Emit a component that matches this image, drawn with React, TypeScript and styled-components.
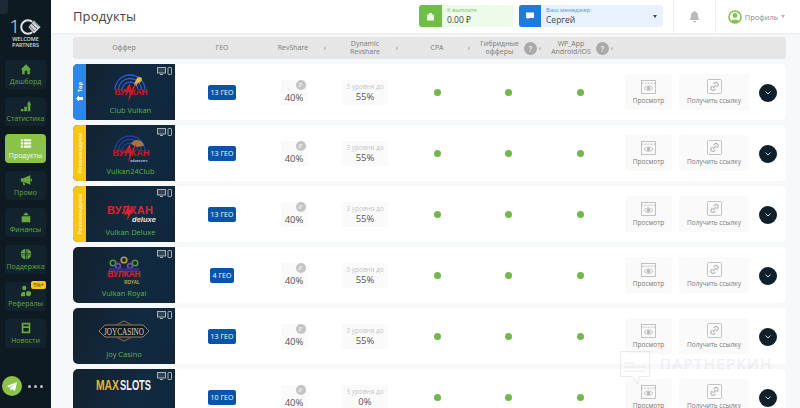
import React from "react";
import styled, { createGlobalStyle } from "styled-components";

const Global = createGlobalStyle`
  html, body { margin: 0; padding: 0; width: 800px; height: 408px; overflow: hidden; background: #f7f8fa; }
  * { box-sizing: border-box; }
  body { font-family: "Open Sans", "Noto Sans", sans-serif; }
`;

const Page = styled.div`display: flex; width: 800px; height: 408px; overflow: hidden; position: relative;`;
const Sidebar = styled.aside`
  width: 51px; flex: none; height: 408px; background: #0e1a22; display: flex; flex-direction: column;
  align-items: center; position: relative; padding-top: 17px;
`;
const TopTab = styled.div`position: absolute; left: 0; top: 0; width: 8px; height: 14px; background: #1b2a33; border-radius: 0 0 3px 0;`;
const Logo = styled.div`display: flex; flex-direction: column; align-items: center; height: 43px; color: #d9dde0; font-size: 5.5px; font-weight: 600; line-height: 6px; text-align: center; letter-spacing: -.1px;`;
const LogoMark = styled.div`display: flex; align-items: center; height: 19px; font-size: 19px; font-weight: 300; line-height: 19px; color: #dfe3e6;`;
const Nav = styled.nav`display: flex; flex-direction: column; gap: 8px; width: 41px;`;
const NavItem = styled.div<{ $active?: boolean }>`
  height: 29px; border-radius: 4px; background: ${p => p.$active ? "#8bc34a" : "#13232d"};
  color: ${p => p.$active ? "#f4faee" : "#66a83e"}; display: flex; flex-direction: column; align-items: center; justify-content: center;
  gap: 3px; font-size: 7px; line-height: 8px; position: relative; white-space: nowrap;
`;
const Badge = styled.span`position: absolute; right: 0; top: -1px; background: #f5c518; color: #4a3b00; font-size: 5.5px; line-height: 8px; padding: 0 2px; border-radius: 2px;`;
const SideFoot = styled.div`position: absolute; left: 2px; top: 376px; display: flex; align-items: center; gap: 6px;`;
const TgCircle = styled.div`width: 20px; height: 20px; border-radius: 50%; background: #8bc34a; display: flex; align-items: center; justify-content: center;`;
const Dots = styled.div`display: flex; gap: 3px;`;
const Dot = styled.i`width: 3px; height: 3px; border-radius: 50%; background: #b9c0c4; display: block;`;

const Main = styled.main`flex: 1; min-width: 0; display: flex; flex-direction: column;`;
const Topbar = styled.header`
  height: 33px; flex: none; background: #fff; box-shadow: 0 1px 2px rgba(0,0,0,.06); display: flex; align-items: center; padding-left: 22px;
`;
const Title = styled.h1`margin: 0 0 1px; font-size: 13px; font-weight: 400; color: #444; width: 346px; letter-spacing: .15px;`;
const InfoBox = styled.div<{ $w: number; $bg: string }>`
  width: ${p => p.$w}px; height: 22px; margin: 0 5px 1px 0; border-radius: 3px; background: ${p => p.$bg}; display: flex; align-items: center; position: relative;
`;
const InfoIcon = styled.div<{ $bg: string; $w: number }>`
  width: ${p => p.$w}px; height: 22px; border-radius: 3px 0 0 3px; background: ${p => p.$bg}; display: flex; align-items: center; justify-content: center; flex: none;
`;
const InfoText = styled.div`padding-left: 5px; display: flex; flex-direction: column; gap: 1px;`;
const InfoLabel = styled.span<{ $c: string }>`font-size: 6px; line-height: 7px; color: ${p => p.$c};`;
const InfoValue = styled.span`font-size: 8.5px; line-height: 10px; color: #444;`;
const Caret = styled.i<{ $c: string; $r: number; $t: number }>`
  position: absolute; right: ${p => p.$r}px; top: ${p => p.$t}px; width: 0; height: 0; border-left: 2.5px solid transparent; border-right: 2.5px solid transparent; border-top: 3px solid ${p => p.$c};
`;
const BarCell = styled.div<{ $w: number; $ml?: number }>`
  width: ${p => p.$w}px; margin-left: ${p => p.$ml ?? 0}px; height: 33px; border-left: 1px solid #eceef0; display: flex; align-items: center; justify-content: center; flex: none; position: relative;
`;
const ProfileText = styled.span`font-size: 7.5px; color: #8a8a8a; margin-left: 3px;`;
const ProfileWrap = styled.div`display: flex; align-items: center; margin-right: 10px;`;

const Content = styled.div`padding: 4px 14px 0 22px; display: flex; flex-direction: column; gap: 5px;`;
const cols = "102px 82px 72px 72px 72px 71px 72px 1fr";
const HeaderRow = styled.div`
  height: 22px; flex: none; background: #e6e6e6; border-radius: 3px; display: grid; grid-template-columns: ${cols}; align-items: center;
  color: #7a7a7a; font-size: 7px; line-height: 8px; text-align: center;
`;
const HCell = styled.div<{ $pl?: number }>`
  display: flex; align-items: center; justify-content: center; padding-left: ${p => p.$pl ?? 0}px; position: relative; height: 22px;
`;
const HDot = styled.i`position: absolute; right: 3px; top: 10px; width: 2px; height: 3px; background: #bdbdbd; border-radius: 1px; display: block;`;
const Help = styled.span`
  width: 13px; height: 13px; border-radius: 50%; background: #a8a8a8; color: #e6e6e6; font-size: 8px; font-weight: 700; line-height: 13px; margin-left: 5px; flex: none;
`;

const Row = styled.div`
  height: 56px; flex: none; background: #fff; border-radius: 5px; display: grid; grid-template-columns: ${cols}; align-items: center;
`;
const Offer = styled.div`height: 56px; display: flex; border-radius: 5px 0 0 5px; overflow: hidden; position: relative;
  background: linear-gradient(115deg, #13212d 0%, #112a40 60%, #10263a 100%);`;
const Tag = styled.div<{ $bg: string }>`
  width: 13px; flex: none; background: ${p => p.$bg}; display: flex; flex-direction: column; align-items: center; justify-content: center; gap: 2px;
`;
const TagText = styled.span<{ $c: string }>`writing-mode: vertical-rl; transform: rotate(180deg); font-size: 5.6px; font-weight: 700; white-space: nowrap; color: ${p => p.$c};`;
const OfferBody = styled.div`flex: 1; display: flex; flex-direction: column; align-items: center; position: relative; padding-top: 6px;`;
const LogoBox = styled.div`height: 34px; display: flex; align-items: center; justify-content: center;`;
const OfferName = styled.div`font-size: 7.5px; line-height: 10px; color: #5fb24a; margin-top: 1px;`;
const Devices = styled.div`position: absolute; right: 3px; top: 3px; display: flex;`;

const GeoCell = styled.div`display: flex; justify-content: center; padding-left: 12px;`;
const Geo = styled.div`
  background: #0b53a8; color: #fff; font-size: 7px; font-weight: 500; height: 15px; line-height: 15px; padding: 0 3px; border-radius: 2px; min-width: 24px; text-align: center;
`;
const Center = styled.div`display: flex; justify-content: center;`;
const RevBox = styled.div`
  width: 27px; height: 25px; background: #fafafa; border-radius: 2px; display: flex; flex-direction: column; align-items: center; position: relative; padding-top: 12px; margin-left: 2px;
`;
const Rub = styled.span`
  position: absolute; top: 0; right: 2px; width: 10px; height: 10px; border-radius: 50%; background: #c4c4c4; color: #f4f4f4; font-size: 6px; line-height: 10px; text-align: center;
`;
const Pct = styled.span`font-size: 9.5px; line-height: 12px; color: #555;`;
const DynBox = styled.div`width: 46px; height: 25px; background: #fafafa; border-radius: 2px; display: flex; flex-direction: column; align-items: center; justify-content: center;`;
const DynLabel = styled.span`font-size: 6.5px; line-height: 9px; color: #c6c6c6; white-space: nowrap;`;
const Status = styled.i`width: 7px; height: 7px; border-radius: 50%; background: #72b84c; display: block;`;
const Actions = styled.div`display: flex; align-items: center; padding-left: 9px;`;
const Action = styled.div<{ $w: number; $mr: number }>`
  width: ${p => p.$w}px; margin-right: ${p => p.$mr}px; height: 36px; background: #fafafa; border-radius: 3px; display: flex; flex-direction: column; align-items: center; justify-content: center; gap: 2px;
  color: #777; font-size: 6.5px; line-height: 9px; white-space: nowrap; flex: none;
`;
const Chevron = styled.div`width: 18px; height: 18px; margin-top: 1px; border-radius: 50%; background: #0f1f2b; display: flex; align-items: center; justify-content: center; flex: none;`;

const Watermark = styled.div`position: absolute; left: 620px; top: 351px; display: flex; align-items: flex-start; gap: 10px; pointer-events: none;`;
const WmText = styled.span`font-size: 15px; line-height: 16px; margin-top: 4px; letter-spacing: 1.5px; color: rgba(225,228,231,.2); -webkit-text-stroke: .5px rgba(190,195,200,.3); font-weight: 400;`;

const DevicesIcon = () => (
  <svg width="15" height="8" viewBox="0 0 15 8" fill="none" stroke="#a9b2b8" strokeWidth="1">
    <rect x=".5" y=".5" width="8" height="5.5" fill="#a9b2b8" fillOpacity=".2" /><path d="M3 7.5h3" />
    <rect x="11" y=".5" width="3.5" height="7" rx=".6" />
  </svg>
);
const Eye = () => (
  <svg width="15" height="14" viewBox="0 0 15 14" fill="none" stroke="#b5b5b5" strokeWidth=".8">
    <rect x=".5" y=".5" width="14" height="13" /><path d="M.5 3.2h14" strokeDasharray="2 1" />
    <path d="M3 8.2c2.5-3 6.500-3 9 0-2.500 3-6.500 3-9 0z" /><circle cx="7.500" cy="8.200" r="1.400" fill="#b5b5b5" />
  </svg>
);
const LinkI = () => (
  <svg width="15" height="15" viewBox="0 0 15 15" fill="none" stroke="#b5b5b5" strokeWidth=".8">
    <rect x=".5" y=".5" width="14" height="14" rx="1" />
    <path d="M6 9l3-3M6.500 5.200l1-1a2 2 0 013 3l-1 1M8.500 9.800l-1 1a2 2 0 01-3-3l1-1" strokeWidth="1.100" />
  </svg>
);
const wordStyle = { fontFamily: "'Liberation Sans', sans-serif", fontWeight: 700 } as const;

const VulkanLogo = ({ sub }: { sub?: string }) => (
  <svg width="40" height="34" viewBox="0 0 40 34">
    <g fill="none" stroke={sub ? "#23429e" : "#2f5bd0"} strokeWidth="1.300">
      <path d="M4 20a15 15 0 0130 0" /><path d="M7.500 20a11.500 11.500 0 0123 0" /><path d="M11 20a8 8 0 0116 0" />
    </g>
    {sub
      ? <path d="M20 13c2-5 9-5 12-1l1 3-7 1z" fill="#a5743f" />
      : <path d="M26 8c2-2 5-1 5 1s-2 4-4 4l-2 3-2-2z" fill="#d8b84a" />}
    <path d="M13 22l6-9 1 7 6-8-9 20 2-10z" fill="#e0232e" />
    <text x="20" y="25" textAnchor="middle" fontSize="9.500" fill="#e0232e" stroke="#7a0d16" strokeWidth=".3" textLength={sub ? 37 : 33} lengthAdjust="spacingAndGlyphs" style={wordStyle}>ВУЛКАН</text>
    {sub && <text x="28" y="31" textAnchor="middle" fontSize="3.500" fill="#b6c2e0" style={wordStyle}>{sub}</text>}
  </svg>
);
const DeluxeLogo = () => (
  <svg width="50" height="34" viewBox="0 0 50 34">
    <path d="M18 23l5-11 1 7 5-7-8 17 1-7z" fill="#e0232e" />
    <text x="24" y="22" textAnchor="middle" fontSize="11" fill="#e0232e" textLength="46" lengthAdjust="spacing" style={wordStyle}>ВУЛКАН</text>
    <text x="38" y="30" textAnchor="middle" fontSize="7.500" fontStyle="italic" fill="#e6e6e6" style={wordStyle}>deluxe</text>
  </svg>
);
const RoyalLogo = () => (
  <svg width="36" height="34" viewBox="0 0 36 34">
    <g fill="none" strokeWidth="1.600">
      <circle cx="7" cy="10" r="2.800" stroke="#5f8f3a" /><circle cx="18" cy="7" r="2.800" stroke="#b8a23a" /><circle cx="29" cy="10" r="2.800" stroke="#5f8f3a" />
      <circle cx="12" cy="13" r="2.400" stroke="#6f4fb0" /><circle cx="24" cy="13" r="2.400" stroke="#6f4fb0" />
    </g>
    <path d="M3 15h30v4H3z" fill="#3b2f8f" opacity=".8" />
    <text x="18" y="24" textAnchor="middle" fontSize="8.500" fill="#e0232e" textLength="33" lengthAdjust="spacingAndGlyphs" style={wordStyle}>ВУЛКАН</text>
    <text x="26" y="31" textAnchor="middle" fontSize="4.500" fill="#c9a83a" style={wordStyle}>ROYAL</text>
  </svg>
);
const JoyLogo = () => (
  <svg width="54" height="34" viewBox="0 0 54 34">
    <path d="M2 17l6-6h38l6 6-6 6H8z" fill="#101a22" stroke="#b39a76" strokeWidth=".8" />
    <path d="M19 11l8-4 8 4M19 23l8 4 8-4" fill="none" stroke="#7a5a3a" strokeWidth="1.200" />
    <text x="27" y="21" textAnchor="middle" fontSize="11" fill="#d9d2c2" textLength="40" lengthAdjust="spacingAndGlyphs" style={{ fontFamily: "'Liberation Serif', serif" }}>JOYCASINO</text>
  </svg>
);
const MaxLogo = () => (
  <svg width="56" height="34" viewBox="0 0 56 34">
    <text x="0" y="15" fontSize="15" fill="#e5b53c" textLength="23" lengthAdjust="spacingAndGlyphs" style={wordStyle}>MAX</text>
    <text x="24" y="15" fontSize="15" fill="#eef1f3" textLength="31" lengthAdjust="spacingAndGlyphs" style={wordStyle}>SLOTS</text>
  </svg>
);

const navIcons: Record<string, React.ReactNode> = {
  "Дашборд": <path d="M1 7.500L7 1.500l6 6h-1.500V13H8.500V9h-3v4H2.500V7.500z" />,
  "Статистика": <path d="M1 13v-2.500h3V13zM5 13V8h3v5zM9 13V4.500L8 5.500l2.500-4.500L13 5.500h-1V13z" />,
  "Продукты": <path d="M1 2.500h2.500v2.500H1zM4.500 2.500H13v2.500H4.500zM1 6.200h2.500v2.500H1zM4.500 6.200H13v2.500H4.500zM1 10h2.500v2.500H1zM4.500 10H13v2.500H4.500z" />,
  "Промо": <path d="M1 5h3l8-3.500v11L4 9H1zM3 9.500h2L6 13H4zM12.500 5.500h1.500v3h-1.500z" />,
  "Финансы": <path d="M2 6h10v7H2zM3.500 5l3.500-3.500L10.500 5zM5 8h4v1H5z" />,
  "Поддержка": <g><circle cx="7" cy="7" r="6.200" /><path d="M0 6h14v.8H0zM0 7.800h14v.8H0zM6 0h.8v14H6zM7.800 0h.8v14h-.8z" fill="#13232d" /></g>,
  "Рефералы": <path d="M5 1a2.500 2.500 0 110 5 2.500 2.500 0 010-5zM1 13c0-4 2-5 4-5l1 1v4zM10 7a3 3 0 110 6 3 3 0 010-6z" />,
  "Новости": <path fillRule="evenodd" d="M2 1h10v12H2zM4 3v2h6V3zM4 7v4h6V7z" />,
};

const NavEntry = ({ name, active, badge }: { name: string; active?: boolean; badge?: string }) => (
  <NavItem $active={active}>
    {badge && <Badge>{badge}</Badge>}
    <svg width="12" height="12" viewBox="0 0 14 14" fill={active ? "#f4faee" : "#66a83e"}>{navIcons[name]}</svg>
    <span>{name}</span>
  </NavItem>
);

type Off = { name: string; tag?: "top" | "rec"; logo: React.ReactNode; geo: string; dyn: string };
const offers: Off[] = [
  { name: "Club Vulkan", tag: "top", logo: <VulkanLogo />, geo: "13 ГЕО", dyn: "55%" },
  { name: "Vulkan24Club", tag: "rec", logo: <VulkanLogo sub="advancers" />, geo: "13 ГЕО", dyn: "55%" },
  { name: "Vulkan Deluxe", tag: "rec", logo: <DeluxeLogo />, geo: "13 ГЕО", dyn: "55%" },
  { name: "Vulkan Royal", logo: <RoyalLogo />, geo: "4 ГЕО", dyn: "55%" },
  { name: "Joy Casino", logo: <JoyLogo />, geo: "13 ГЕО", dyn: "55%" },
  { name: "", logo: <MaxLogo />, geo: "10 ГЕО", dyn: "0%" },
];

export default function App() {
  return (
    <Page>
      <Global />
      <Sidebar>
        <TopTab />
        <Logo>
          <LogoMark>
            1
            <svg width="22" height="18" viewBox="0 0 22 18">
              <circle cx="8" cy="9" r="6.800" fill="none" stroke="#dfe3e6" strokeWidth="2" />
              <path d="M14 2l7 7-7 7-6-7z" fill="#c9ced2" stroke="#0e1a22" strokeWidth=".6" />
              <path d="M11 5l6 6M14 3.500l5 5M9.500 8l5 5" stroke="#0e1a22" strokeWidth=".6" />
            </svg>
          </LogoMark>
          <span>WELCOME</span>
          <span>PARTNERS</span>
        </Logo>
        <Nav>
          <NavEntry name="Дашборд" />
          <NavEntry name="Статистика" />
          <NavEntry name="Продукты" active />
          <NavEntry name="Промо" />
          <NavEntry name="Финансы" />
          <NavEntry name="Поддержка" />
          <NavEntry name="Рефералы" badge="5%+" />
          <NavEntry name="Новости" />
        </Nav>
        <SideFoot>
          <TgCircle>
            <svg width="12" height="12" viewBox="0 0 12 12"><path d="M1 6l10-4-2 9-3-2-1.500 1.500L4 8l4-3.500L3 7.500z" fill="#fff" /></svg>
          </TgCircle>
          <Dots><Dot /><Dot /><Dot /></Dots>
        </SideFoot>
      </Sidebar>
      <Main>
        <Topbar>
          <Title>Продукты</Title>
          <InfoBox $w={95} $bg="#eefaea">
            <InfoIcon $bg="#6fbf45" $w={23}>
              <svg width="9" height="9" viewBox="0 0 9 9" fill="#eef8e8"><path d="M1 2.500h7v6H1zM3 1h3v1.500H3z" /></svg>
            </InfoIcon>
            <InfoText><InfoLabel $c="#7cc25a">К выплате</InfoLabel><InfoValue>0.00 ₽</InfoValue></InfoText>
          </InfoBox>
          <InfoBox $w={144} $bg="#e8f1fd">
            <InfoIcon $bg="#1f7ae0" $w={22}>
              <svg width="10" height="10" viewBox="0 0 10 10" fill="#fff"><path d="M1 1.500h8v5.500H4L2.500 8.500V7H1z" /></svg>
            </InfoIcon>
            <InfoText><InfoLabel $c="#4b93e0">Ваш менеджер:</InfoLabel><InfoValue>Сергей</InfoValue></InfoText>
            <Caret $c="#2a4a6a" $r={6} $t={10} />
          </InfoBox>
          <BarCell $w={42} $ml={5}>
            <svg width="11" height="12" viewBox="0 0 11 12" fill="#b9b9b9"><path d="M5.500 0a1 1 0 011 1c2 .5 2.500 2 2.500 4 0 2 1 3 1.500 4H.5C1 8 2 7 2 5c0-2 .5-3.500 2.500-4a1 1 0 011-1zM4 10h3a1.500 1.500 0 01-3 0z" /></svg>
          </BarCell>
          <BarCell $w={85}>
            <ProfileWrap>
              <svg width="14" height="14" viewBox="0 0 14 14"><circle cx="7" cy="7" r="6" fill="#fff" stroke="#80c253" strokeWidth="1.600" /><circle cx="7" cy="5.500" r="2.400" fill="#80c253" /><path d="M2.800 11.500c1-2.800 7.400-2.800 8.400 0A6 6 0 012.800 11.500z" fill="#80c253" /></svg>
              <ProfileText>Профиль</ProfileText>
            </ProfileWrap>
            <Caret $c="#b5b5b5" $r={15} $t={15} />
          </BarCell>
        </Topbar>
        <Content>
          <HeaderRow>
            <HCell>Оффер</HCell>
            <HCell $pl={12}>ГЕО</HCell>
            <HCell>RevShare<HDot /></HCell>
            <HCell>Dynamic<br />Revshare<HDot /></HCell>
            <HCell>CPA<HDot /></HCell>
            <HCell>
              <span>Гибридные<br />офферы</span><Help>?</Help><HDot />
            </HCell>
            <HCell>
              <span>WP_App<br />Android/iOS</span><Help>?</Help><HDot />
            </HCell>
            <HCell />
          </HeaderRow>
          {offers.map((o, i) => (
            <Row key={i}>
              <Offer>
                {o.tag && (
                  <Tag $bg={o.tag === "top" ? "#2f86ea" : "#f6c616"}>
                    {o.tag === "top" ? (
                      <>
                        <TagText $c="#ffffff">Top</TagText>
                        <svg width="7" height="7" viewBox="0 0 7 7" fill="#fff"><path d="M0 3.500L3 .5v1.500h4v3H3v1.500z" /></svg>
                      </>
                    ) : (
                      <TagText $c="#fdf0b0">Рекомендуем</TagText>
                    )}
                  </Tag>
                )}
                <OfferBody>
                  <Devices><DevicesIcon /></Devices>
                  <LogoBox>{o.logo}</LogoBox>
                  {o.name && <OfferName>{o.name}</OfferName>}
                </OfferBody>
              </Offer>
              <GeoCell><Geo>{o.geo}</Geo></GeoCell>
              <Center><RevBox><Rub>₽</Rub><Pct>40%</Pct></RevBox></Center>
              <Center><DynBox><DynLabel>3 уровня до</DynLabel><Pct>{o.dyn}</Pct></DynBox></Center>
              <Center><Status /></Center>
              <Center><Status /></Center>
              <Center><Status /></Center>
              <Actions>
                <Action $w={47} $mr={7}><Eye />Просмотр</Action>
                <Action $w={70} $mr={10}><LinkI />Получить ссылку</Action>
                <Chevron>
                  <svg width="8" height="6" viewBox="0 0 8 6" fill="none" stroke="#d7dde2" strokeWidth="1"><path d="M1.500 1.500L4 4l2.500-2.500" /></svg>
                </Chevron>
              </Actions>
            </Row>
          ))}
        </Content>
      </Main>
      <Watermark>
        <svg width="30" height="36" viewBox="0 0 30 36" fill="none" stroke="#d4d7da" strokeOpacity=".5" strokeWidth="1">
          <path d="M.5.500h29v25H19l-1 8-6-8H.5z" />
          <path d="M4 12h10M4 16h22M4 20h22" />
        </svg>
        <WmText>ПАРТНЕРКИН</WmText>
      </Watermark>
    </Page>
  );
}
